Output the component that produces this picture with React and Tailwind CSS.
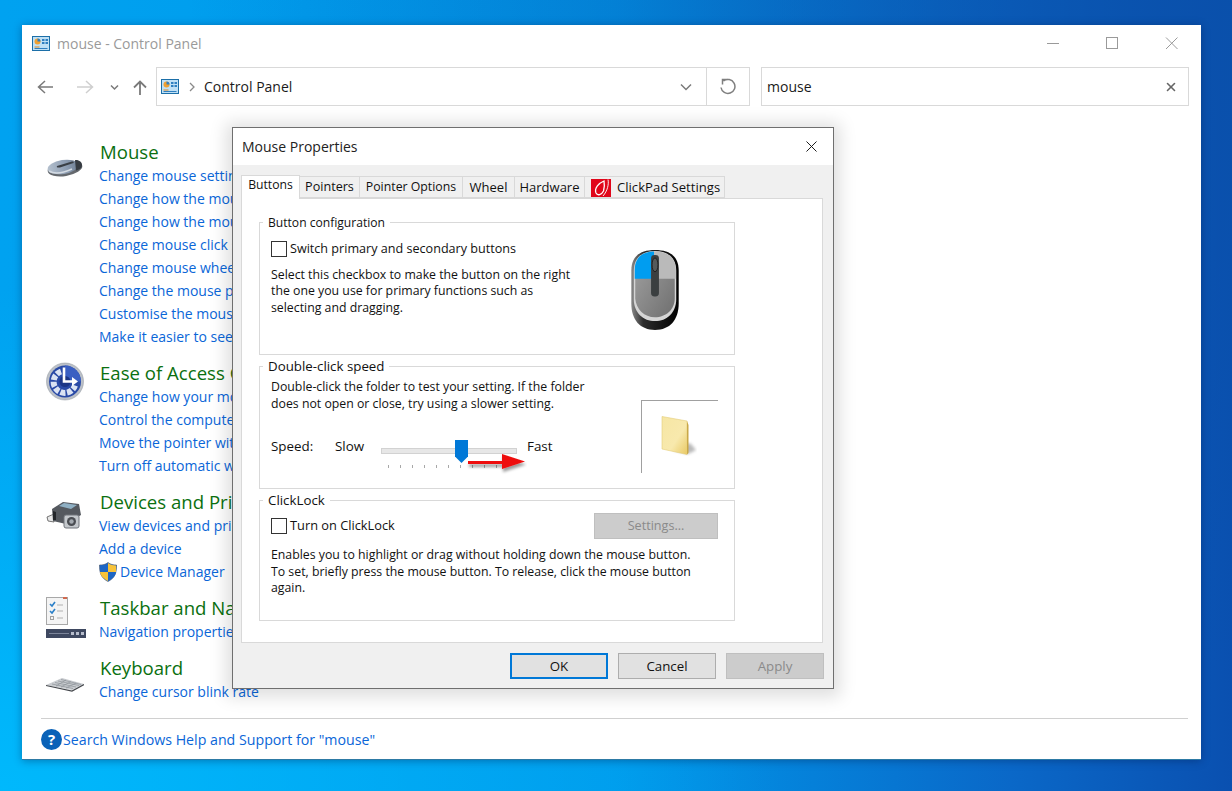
import { X } from "lucide-react";

const sections = [
  {
    title: "Mouse",
    icon: <MouseIcon />,
    iconClass: "mt-[14px]",
    links: [
      "Change mouse settings",
      "Change how the mouse pointer looks",
      "Change how the mouse pointer looks when it's moving",
      "Change mouse click settings",
      "Change mouse wheel settings",
      "Change the mouse pointer display or speed",
      "Customise the mouse buttons",
      "Make it easier to see the mouse pointer",
    ],
  },
  {
    title: "Ease of Access Centre",
    icon: <EaseIcon />,
    iconClass: "",
    links: [
      "Change how your mouse works",
      "Control the computer without the mouse or keyboard",
      "Move the pointer with the keypad using MouseKeys",
      "Turn off automatic window arrangement",
    ],
  },
  {
    title: "Devices and Printers",
    icon: <DevicesIcon />,
    iconClass: "mt-[9px]",
    links: ["View devices and printers", "Add a device", "Device Manager"],
  },
  {
    title: "Taskbar and Navigation",
    icon: <TaskbarIcon />,
    iconClass: "",
    links: ["Navigation properties"],
  },
  {
    title: "Keyboard",
    icon: <KeyboardIcon />,
    iconClass: "mt-[20px]",
    links: ["Change cursor blink rate"],
  },
];

const tabs = [
  { label: "Pointers", className: "w-[60px] text-[12.6px]" },
  { label: "Pointer Options", className: "w-[103px] text-[12.3px]" },
  { label: "Wheel", className: "w-[52px] text-[13px]" },
  { label: "Hardware", className: "w-[70px] text-[13px]" },
];

function PanelIcon() {
  return (
    <svg width="18" height="15" viewBox="0 0 18 15">
      <rect x="0.5" y="0.5" width="17" height="14" fill="#bfe0f5" stroke="#1c6fa8" />
      <circle cx="5.5" cy="5.5" r="3" fill="#f0a030" />
      <path d="M5.5 5.5V2.5A3 3 0 0 1 8.5 5.5Z" fill="#2f7fc0" />
      <rect x="10" y="3" width="2.5" height="2" fill="#2f7fc0" />
      <rect x="13.5" y="3" width="2.5" height="2" fill="#2f7fc0" />
      <rect x="10" y="6" width="2.5" height="2" fill="#2f7fc0" />
      <rect x="13.5" y="6" width="2.5" height="2" fill="#2f7fc0" />
      <rect x="2.5" y="10.5" width="5" height="1" fill="#e08a20" />
      <rect x="2.5" y="12" width="13" height="1" fill="#2f7fc0" />
    </svg>
  );
}

function MouseIcon() {
  return (
    <svg width="38" height="23" viewBox="0 0 38 23">
      <defs>
        <linearGradient id="smallMouse" x1="0" y1="0" x2="1" y2="0">
          <stop offset="0" stopColor="#b4c0ce" />
          <stop offset="0.6" stopColor="#8d9db2" />
          <stop offset="1" stopColor="#6f7f94" />
        </linearGradient>
      </defs>
      <ellipse cx="19" cy="13.5" rx="17.5" ry="7.5" fill="#4a4f55" opacity="0.85" transform="rotate(-9 19 13.5)" />
      <ellipse cx="17" cy="12" rx="15.5" ry="7" fill="url(#smallMouse)" transform="rotate(-9 17 12)" />
      <path d="M3 16C8 19 17 18 26 14" fill="none" stroke="#d4dbe3" strokeWidth="1.5" />
      <path d="M11 11L26 6.5Q28.5 6 27.5 8L14 12.5Q10 13 11 11Z" fill="#3a3f45" />
      <path d="M29 5C33 4.5 36 7 36 10C36 13 33 15 30 15.5Z" fill="#363b41" />
    </svg>
  );
}

function EaseIcon() {
  return (
    <svg width="38" height="39" viewBox="0 0 38 38">
      <circle cx="19" cy="19" r="18.5" fill="#bcc1c8" stroke="#8c929a" strokeWidth="0.5" />
      <circle cx="19" cy="19" r="16" fill="#2a4aa6" />
      <path d="M19 3A16 16 0 0 1 35 19H19Z" fill="#3a5fc2" />
      <path d="M15 9A11 11 0 1 0 29 23" fill="none" stroke="#dbe3f3" strokeWidth="6" strokeDasharray="5 1.6" />
      <circle cx="19" cy="19" r="5.5" fill="#1c3686" />
      <path d="M18 5V19H27" fill="none" stroke="#ffffff" strokeWidth="2.6" />
      <path d="M26 14.5l6 4.5-6 4.5Z" fill="#ffffff" />
    </svg>
  );
}

function DevicesIcon() {
  return (
    <svg width="38" height="30" viewBox="0 0 38 30">
      <path d="M1 17L8 14V22L2 21Z" fill="#e8e8e8" stroke="#555" strokeWidth="0.8" />
      <path d="M6 9L17 2L33 4L35 15L20 24L7 21Z" fill="#55595f" />
      <path d="M13 6L18 3L31 5L25 9Z" fill="#8fb0c4" />
      <path d="M7 11L10 12V20L7 20Z" fill="#23262a" />
      <rect x="18" y="15" width="15" height="13" rx="2" fill="#c4c8cc" stroke="#70747a" />
      <circle cx="25.5" cy="21.5" r="4.5" fill="#4a4d52" />
      <circle cx="25.5" cy="21.5" r="2.2" fill="#a4aab0" />
    </svg>
  );
}

function TaskbarIcon() {
  return (
    <svg width="40" height="41" viewBox="0 0 40 41">
      <rect x="0.5" y="0.5" width="21" height="27" fill="#f4f4f4" stroke="#a8a8a8" />
      <rect x="17" y="0" width="4" height="2" fill="#d06a50" />
      <path d="M4 7l2 2 3-4M4 14l2 2 3-4" fill="none" stroke="#2a7fc8" strokeWidth="1.6" />
      <rect x="4.5" y="19.5" width="3" height="3" fill="none" stroke="#a0a0a0" />
      <path d="M11 8h6M11 14h6M11 21h6" stroke="#b0b0b0" />
      <rect x="0" y="32" width="40" height="9" fill="#3e4860" />
      <rect x="3" y="36" width="20" height="1" fill="#7c859a" />
      <rect x="25" y="35" width="3" height="3" fill="#b6bccb" />
      <rect x="30" y="35" width="3" height="3" fill="#b6bccb" />
      <rect x="35" y="35" width="3" height="3" fill="#b6bccb" />
    </svg>
  );
}

function KeyboardIcon() {
  return (
    <svg width="38" height="15" viewBox="0 0 38 15">
      <path d="M0 8L16 1L38 7L26 13Z" fill="#c9ccd0" />
      <path d="M6 7L27 11.5M9 5.5L30 10M12 4L33 8.5M15 2.5L35 7.5M10 9L20 3M15 10L25 4.5M20 11L30 6" stroke="#8d9298" strokeWidth="0.7" />
      <path d="M0 8.5L26 14L38 7.5" fill="none" stroke="#44474c" strokeWidth="1.2" />
    </svg>
  );
}

function ShieldIcon() {
  return (
    <svg width="18" height="20" viewBox="0 0 18 20" className="shrink-0">
      <path d="M9 0.5C6.5 2.5 4 3 0.5 3C0.5 11 2 16 9 19.5C16 16 17.5 11 17.5 3C14 3 11.5 2.5 9 0.5Z" fill="#2a6fc0" stroke="#3a4a66" strokeWidth="0.6" />
      <path d="M9 1V10H1C0.9 7.5 1 5 1 3.4C4 3.4 6.5 3 9 1Z" fill="#1e66c4" />
      <path d="M9 1C11.5 3 14 3.4 17 3.4C17 5 17.1 7.5 17 10H9Z" fill="#f8c33a" />
      <path d="M1 10H9V19C3.5 16 1.5 13.5 1 10Z" fill="#f8c33a" />
      <path d="M9 10H17C16.5 13.5 14.5 16 9 19Z" fill="#1e66c4" />
    </svg>
  );
}

function ClickPadIcon() {
  return (
    <svg width="20" height="18" viewBox="0 0 20 18" className="shrink-0">
      <rect width="20" height="18" fill="#e0061a" />
      <path d="M13 2C8 4 3 9 5 14C6.5 17 10.5 16 12.5 12C13.5 9 13.5 5 13 2Z" fill="none" stroke="#ffffff" strokeWidth="1.3" />
      <path d="M17 0.5C18 5 16.5 12 12 17" fill="none" stroke="#ffffff" strokeWidth="0.9" />
    </svg>
  );
}

function BigMouse() {
  return (
    <svg width="50" height="80" viewBox="0 0 50 81">
      <defs>
        <linearGradient id="bodyFill" x1="0" y1="0" x2="1" y2="0">
          <stop offset="0" stopColor="#8a8a8a" />
          <stop offset="0.25" stopColor="#2d2d2d" />
          <stop offset="1" stopColor="#000000" />
        </linearGradient>
        <linearGradient id="shellFill" x1="0" y1="0" x2="1" y2="1">
          <stop offset="0" stopColor="#a2a2a2" />
          <stop offset="1" stopColor="#6f6f6f" />
        </linearGradient>
      </defs>
      <path d="M25 0C41 0 49 7 49 21V54C49 71 40 81 25 81C10 81 1 71 1 54V21C1 7 9 0 25 0Z" fill="url(#bodyFill)" />
      <path d="M25 1C38 1 46.5 8 46.5 21V50C46.5 63 37 72 25 72C13 72 3.5 63 3.5 50V21C3.5 8 12 1 25 1Z" fill="#d5d5d5" />
      <path d="M25 2C38 2 45 9 45 21V49C45 60 36 68 25 68C14 68 6 60 5 49V21C5 9 12 2 25 2Z" fill="url(#shellFill)" />
      <path d="M24 1.5V29H4.5V20C4.5 8 12 1.5 24 1.5Z" fill="#009df0" />
      <path d="M24 1.5C38 1.5 46 8 46 20V29H24Z" fill="#bababa" />
      <rect x="21" y="5" width="8" height="42" rx="3.5" fill="#3b3f40" />
      <ellipse cx="25" cy="15" rx="3" ry="7" fill="#555a5b" stroke="#222" />
    </svg>
  );
}

function Folder() {
  return (
    <svg width="36" height="40" viewBox="0 0 36 40">
      <defs>
        <linearGradient id="folderFill" x1="0" y1="0" x2="1" y2="1">
          <stop offset="0" stopColor="#f6e6a4" />
          <stop offset="0.6" stopColor="#f8e9ad" />
          <stop offset="1" stopColor="#e9c964" />
        </linearGradient>
        <filter id="folderShadow" x="-30%" y="-30%" width="160%" height="160%">
          <feGaussianBlur stdDeviation="1.4" />
        </filter>
      </defs>
      <path d="M12 34L27 38L35 34L29 27Z" fill="#8c8c8c" opacity="0.6" filter="url(#folderShadow)" />
      <path d="M1 0.5L26 5V38.5L1 33Z" fill="url(#folderFill)" stroke="#e4cd78" strokeWidth="0.6" />
      <path d="M26 5L26 38.5L27.5 37V9Z" fill="#c9a848" />
    </svg>
  );
}

function Slider() {
  return (
    <svg width="146" height="36" viewBox="0 0 146 36">
      <defs>
        <filter id="arrowShadow" x="-20%" y="-50%" width="140%" height="220%">
          <feDropShadow dx="1" dy="3" stdDeviation="1.6" floodColor="#000000" floodOpacity="0.4" />
        </filter>
      </defs>
      <rect x="0.5" y="8.5" width="135" height="5" fill="#e7e7e7" stroke="#d2d2d2" />
      <path d="M7.5 25v3M19.5 25v3M31.5 25v3M43.5 25v3M55.5 25v3M67.5 25v3M79.5 25v3M91.5 25v3M103.5 25v3M115.5 25v3" stroke="#a8a8a8" />
      <path d="M74 0H87V16.5L80.5 23L74 16.5Z" fill="#0078d7" />
      <g filter="url(#arrowShadow)">
        <path d="M87 21H121V14L144 21.5L121 29V24H87Z" fill="#ee1111" />
      </g>
    </svg>
  );
}

function Checkbox() {
  return <span className="w-[16px] h-[16px] border border-[#333333] bg-white shrink-0" />;
}

function Group({ title, height, titleSize, children }) {
  return (
    <fieldset className={`border border-[#d9d9d9] w-[476px] px-[11px] mb-[2px] ${height}`}>
      <legend className={`-ml-[8px] px-[5px] leading-[18px] text-[#111111] ${titleSize}`}>{title}</legend>
      {children}
    </fieldset>
  );
}

function DialogButton({ label, className }) {
  return (
    <button className={`h-[26px] flex items-center justify-center pt-px border ${className}`}>{label}</button>
  );
}

function MouseDialog() {
  return (
    <div className="absolute left-[232px] top-[127px] w-[602px] h-[562px] bg-[#f0f0f0] border border-[#6f6f6f] shadow-[0_2px_16px_6px_rgba(0,0,0,0.13)] text-[12.6px] text-[#111111] flex flex-col">
      <div className="h-[37px] bg-white flex items-center justify-between pl-[9px] pr-[12px] shrink-0">
        <span className="text-[14px] text-[#222222]">Mouse Properties</span>
        <X size={19} strokeWidth={1.2} className="text-[#111111]" />
      </div>
      <div className="pl-[8px] pt-[10px] flex-1">
        <div className="flex items-end h-[23px]">
          <div className="relative z-10 h-[24px] -mb-px w-[59px] bg-white border border-b-0 border-[#d9d9d9] flex items-center justify-center pb-[4px] text-[12.2px]">
            Buttons
          </div>
          {tabs.map((tab) => (
            <div key={tab.label} className={`h-[22px] pt-px border border-l-0 border-[#d9d9d9] flex items-center justify-center ${tab.className}`}>
              {tab.label}
            </div>
          ))}
          <div className="h-[22px] w-[140px] pt-px border border-l-0 border-[#d9d9d9] flex items-center gap-[6px] pl-[6px] text-[13.1px]">
            <ClickPadIcon />
            ClickPad Settings
          </div>
        </div>
        <div className="w-[582px] h-[445px] bg-white border border-[#d9d9d9] pl-[17px] pt-[14px]">
          <Group title="Button configuration" height="h-[142px]" titleSize="translate-y-px text-[12.1px]">
            <div className="flex items-center gap-[3px] mt-[9px]">
              <Checkbox />
              <span>Switch primary and secondary buttons</span>
            </div>
            <div className="flex justify-between mt-[-9px] pr-[43px]">
              <p className="w-[310px] text-[12.3px] leading-[16.5px] mt-[17px]">
                Select this checkbox to make the button on the right the one you use for primary functions such as selecting and dragging.
              </p>
              <BigMouse />
            </div>
          </Group>
          <Group title="Double-click speed" height="h-[132px]" titleSize="text-[13.3px]">
            <div className="flex justify-between pr-[5px]">
              <p className="w-[330px] text-[12.3px] leading-[16.5px] mt-[4px]">
                Double-click the folder to test your setting. If the folder does not open or close, try using a slower setting.
              </p>
              <div className="w-[77px] h-[73px] mt-[25px] border-t border-l border-[#a0a0a0] pl-[19px] pt-[15px]">
                <Folder />
              </div>
            </div>
            <div className="flex items-start mt-[-35px] text-[13.4px] leading-[17px]">
              <span className="w-[64px]">Speed:</span>
              <span className="w-[46px]">Slow</span>
              <div className="w-[146px] mt-[2px]">
                <Slider />
              </div>
              <span>Fast</span>
            </div>
          </Group>
          <Group title="ClickLock" height="h-[130px]" titleSize="text-[13.3px]">
            <div className="flex items-center justify-between pr-[5px] mt-[4px]">
              <div className="flex items-center gap-[3px] text-[12.8px]">
                <Checkbox />
                <span>Turn on ClickLock</span>
              </div>
              <DialogButton label="Settings..." className="w-[124px] bg-[#cccccc] border-[#bfbfbf] text-[#8a8a8a]" />
            </div>
            <p className="text-[12.3px] leading-[16.5px] mt-[8px] w-[434px]">
              Enables you to highlight or drag without holding down the mouse button. To set, briefly press the mouse button. To release, click the mouse button again.
            </p>
          </Group>
        </div>
        <div className="flex justify-end gap-[10px] pr-[9px] mt-[10px] text-[13.3px]">
          <DialogButton label="OK" className="w-[98px] border-2 border-[#0078d7] bg-[#e1e1e1]" />
          <DialogButton label="Cancel" className="w-[98px] border-[#adadad] bg-[#e1e1e1]" />
          <DialogButton label="Apply" className="w-[98px] border-[#bfbfbf] bg-[#cccccc] text-[#8a8a8a]" />
        </div>
      </div>
    </div>
  );
}

export default function App() {
  return (
    <div className="relative w-[1232px] h-[791px] overflow-hidden pt-[25px] pl-[22px] font-['Open_Sans',sans-serif] bg-[radial-gradient(ellipse_at_0%_100%,rgba(0,190,255,0.8)_0%,rgba(0,190,255,0)_45%),radial-gradient(ellipse_at_100%_0%,rgba(10,80,170,0.8)_0%,rgba(10,86,174,0)_60%),linear-gradient(90deg,#00a2f0_0%,#0098ea_50%,#0a68c8_82%,#0a50b0_100%)]">
      <div className="w-[1179px] h-[735px] bg-white flex flex-col shadow-[0_1px_8px_rgba(0,30,80,0.4)] border-b border-[#2d7aa5]">
        {/* Title bar */}
        <div className="h-[42px] shrink-0 flex items-center pl-[10px] pb-[5px]">
          <PanelIcon />
          <span className="ml-[7px] text-[14px] text-[#9a9a9a]">mouse - Control Panel</span>
          <div className="ml-auto flex items-center">
            <svg width="131" height="13" viewBox="0 0 131 13" className="mr-[23px]">
              <path d="M0 6.5H12" stroke="#9a9a9a" />
              <rect x="59.5" y="0.5" width="11" height="11" fill="none" stroke="#9a9a9a" />
              <path d="M119 0.5L130.5 12M130.5 0.5L119 12" stroke="#9a9a9a" />
            </svg>
          </div>
        </div>

        {/* Navigation row */}
        <div className="h-[39px] shrink-0 flex items-center">
          <svg width="134" height="22" viewBox="0 0 134 22" className="shrink-0">
            <path d="M31 11H17M23 5L16.5 11L23 17" fill="none" stroke="#7a7a7a" strokeWidth="1.5" />
            <path d="M55 11H70M64 5L70.5 11L64 17" fill="none" stroke="#cfcfcf" strokeWidth="1.5" />
            <path d="M89 9.5L92.5 13L96 9.5" fill="none" stroke="#7a7a7a" strokeWidth="1.5" />
            <path d="M118 19V6M112 11.5L118 5.5L124 11.5" fill="none" stroke="#7a7a7a" strokeWidth="1.8" />
          </svg>
          <div className="w-[594px] h-[39px] border border-[#d9d9d9] flex items-center">
            <div className="flex items-center flex-1 pl-[4px]">
              <PanelIcon />
              <svg width="8" height="10" viewBox="0 0 8 10" className="ml-[9px]">
                <path d="M2 1L6 5L2 9" fill="none" stroke="#8a8a8a" strokeWidth="1.3" />
              </svg>
              <span className="ml-[8px] text-[14px] text-[#1a1a1a]">Control Panel</span>
              <svg width="12" height="8" viewBox="0 0 12 8" className="ml-auto mr-[14px]">
                <path d="M1 1.5L6 6.5L11 1.5" fill="none" stroke="#7a7a7a" strokeWidth="1.5" />
              </svg>
            </div>
            <div className="w-[43px] h-full border-l border-[#d9d9d9] flex items-center justify-center">
              <svg width="16" height="18" viewBox="0 0 16 18">
                <path d="M3.5 3A7 7 0 1 1 1 9.5M2.5 6.5V1.5H7.5" fill="none" stroke="#7f7f7f" strokeWidth="1.5" />
              </svg>
            </div>
          </div>
          <div className="w-[428px] h-[39px] ml-[11px] border border-[#d9d9d9] flex items-center justify-between pl-[5px] pr-[10px]">
            <span className="text-[14px] text-[#1a1a1a]">mouse</span>
            <X size={14} strokeWidth={2.8} className="text-[#666666]" />
          </div>
        </div>

        {/* Search results */}
        <div className="flex-1 flex flex-col gap-[14px] pt-[35px]">
          {sections.map((section) => (
            <div key={section.title} className="flex">
              <div className="w-[78px] pl-[24px] shrink-0">
                <div className={section.iconClass}>{section.icon}</div>
              </div>
              <div>
                <h2 className="h-[23px] leading-[22px] text-[18.6px] text-[#0b7010]">{section.title}</h2>
                {section.links.map((link) => (
                  <div key={link} className="h-[23px] -ml-px flex items-center gap-[3px] text-[14px] text-[#0a66d8]">
                    {link === "Device Manager" && <ShieldIcon />}
                    {link}
                  </div>
                ))}
              </div>
            </div>
          ))}
        </div>

        {/* Footer */}
        <div className="ml-[19px] mr-[13px] h-[41px] shrink-0 border-t border-[#d0d0d0] flex items-center gap-[1px]">
          <span className="w-[21px] h-[21px] rounded-full bg-[#0a62b8] text-white font-bold text-[15px] flex items-center justify-center shrink-0">?</span>
          <span className="pt-px text-[14.2px] text-[#0a66d8]">Search Windows Help and Support for "mouse"</span>
        </div>
      </div>
      <MouseDialog />
    </div>
  );
}
